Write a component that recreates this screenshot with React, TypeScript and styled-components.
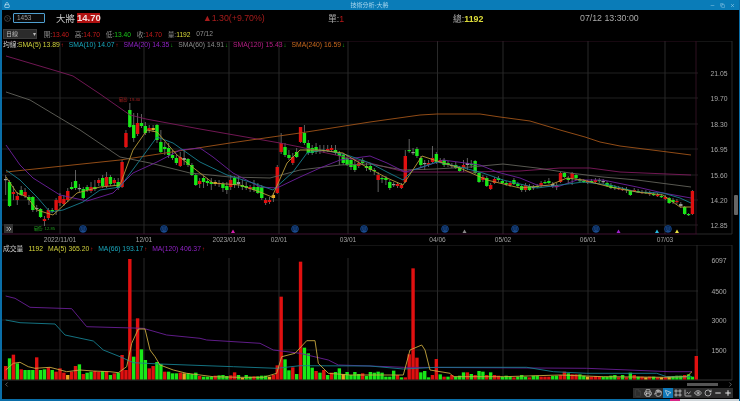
import React from "react";
import styled, { createGlobalStyle } from "styled-components";
import { ChevronLeft, ChevronRight, ChevronsRight, CircleChevronRight, ChartLine, Copy, Eye, File, Frame, Hand, Lock, Minus, MousePointer2, Plus, Printer, RotateCw, X } from "lucide-react";

const FONT = `"Liberation Sans", "Noto Sans CJK TC", sans-serif`;

const Global = createGlobalStyle`
  html, body { margin: 0; background: #000; }
  * { box-sizing: border-box; }
`;

const Win = styled.div`
  width: 740px; height: 401px; display: flex; flex-direction: column; overflow: hidden;
  background: #000; border-left: 2px solid #0a6ea8; border-right: 1px solid #0a6ea8;
  font-family: ${FONT}; color: #a8a8a8; filter: blur(0.35px);
`;
const TitleBar = styled.div`
  height: 10px; flex: none; margin: 0 -1px 0 -2px; padding: 0 5px 0 4px; background: #0a7cb8; color: #cfe8f6;
  display: grid; grid-template-columns: 1fr auto 1fr; align-items: center;
`;
const TitleText = styled.span` font-size: 6px; line-height: 10px; color: #a9d6ee; `;
const WinButtons = styled.div` display: flex; justify-content: flex-end; gap: 5px; color: #a9d6ee; `;
const QuoteRow = styled.div` height: 16px; flex: none; display: flex; align-items: center; padding-left: 2px; `;
const CodeBox = styled.div`
  width: 32px; height: 10px; margin-left: 2px; border: 1px solid #4f9fd0; border-radius: 1px; font-size: 6.5px; line-height: 8px;
  padding-left: 3px; color: #a0a0a0; background: #0a0a0a;
`;
const Name = styled.span` margin-left: 11px; font-size: 9.5px; color: #c8c8c8; width: 20px; white-space: nowrap; `;
const PriceBadge = styled.span`
  margin-left: 1px; width: 23px; height: 10px; background: #b01010; color: #f3dede; font-size: 9.5px; line-height: 10px; font-weight: 700; text-align: center;
`;
const Quote = styled.span<{ $w: number; $c?: string }>`
  font-size: 8.8px; white-space: nowrap; color: ${(p) => p.$c || "#a8a8a8"}; width: ${(p) => p.$w}px; flex: none;
`;
const Yellow = styled.span` color: #dcdc3a; font-weight: 700; `;
const Red = styled.span` color: #b81818; `;
const FilterRow = styled.div` height: 15px; flex: none; display: flex; align-items: center; font-size: 6.7px; padding-left: 1px; gap: 5.7px; `;
const Select = styled.div`
  width: 34px; height: 10px; background: #2b2b2b; border: 1px solid #3c3c3c; font-size: 6px; line-height: 8px; padding-left: 2px; margin-right: 1px;
  display: flex; justify-content: space-between; align-items: center; color: #bbb;
`;
const Stat = styled.span` white-space: nowrap; color: #8e8e8e; `;
const StatValue = styled.span<{ $c: string }>` color: ${(p) => p.$c}; `;
const Panel = styled.div<{ $h: number }>` position: relative; height: ${(p) => p.$h}px; flex: none; `;
const Plot = styled.svg` display: block; width: 737px; height: 100%; font-family: ${FONT}; `;
const Legend = styled.div<{ $top: number; $gap: number }>`
  position: absolute; left: 1px; top: ${(p) => p.$top}px; display: flex; font-size: 6.8px; line-height: 8px; gap: ${(p) => p.$gap}px; white-space: nowrap;
`;
const AverageLabel = styled.span` color: #c8c8c8; margin-right: -5.6px; `;
const LegendItem = styled.span<{ $c: string }>` color: ${(p) => p.$c}; `;
const Up = styled.span` color: #d01818; margin-left: 1px; font-size: 6px; font-weight: 700; `;
const Down = styled.span` color: #1ab01a; margin-left: 1px; font-size: 6px; font-weight: 700; `;
const ExpandBtn = styled.div`
  position: absolute; left: 2px; top: 183px; width: 9px; height: 9px; background: #333; color: #ccc;
  display: flex; align-items: center; justify-content: center;
`;
const SideHandle = styled.div` position: absolute; right: 1px; top: 154px; width: 4px; height: 20px; background: #666; border-radius: 1px; `;
const Footer = styled.div` height: 18px; flex: none; display: flex; flex-direction: column; `;
const ScrollRow = styled.div` height: 7px; display: flex; align-items: center; justify-content: space-between; padding: 0 5px 0 1px; color: #999; `;
const ScrollThumb = styled.div` width: 31px; height: 3px; background: #555; margin-left: auto; margin-right: 9px; `;
const Toolbar = styled.div` display: flex; justify-content: flex-end; padding-right: 6px; height: 10px; `;
const ToolBtn = styled.div<{ $on?: boolean; $dim?: boolean }>`
  width: 10px; height: 10px; display: flex; align-items: center; justify-content: center;
  background: ${(p) => (p.$on ? "#0f78b8" : "#2c2c2c")}; color: ${(p) => (p.$dim ? "#444" : "#e4e4e4")};
`;
const BottomBar = styled.div` height: 2px; flex: none; margin: 0 -1px 0 -2px; display: flex; `;
const BottomSeg = styled.div<{ $c: string; $w?: number }>` background: ${(p) => p.$c}; flex: ${(p) => (p.$w ? `0 0 ${p.$w}px` : "1")}; `;

type CandleRow = [number, number, string, number, number];
const candles: CandleRow[] = [
[179,180,"w",175,195],[182,206,"g",180,207],[192,194,"r",186,200],[196,200,"r",192,205],[190,195,"g",186,196],[192,196,"r",188,198],[197,200,"g",195,205],[197,210,"g",196,212],[208,209,"w",205,212],[209,217,"g",208,218],
[219,221,"r",216,226],[210,218,"r",208,220],[210,211,"g",208,213],[200,210,"r",198,215],[196,203,"r",193,206],[199,204,"r",195,206],[191,200,"r",188,202],[187,189,"g",182,190],[181,188,"g",170,190],[188,189,"w",184,192],
[189,198,"g",187,199],[187,190,"g",185,192],[187,191,"r",182,193],[187,189,"g",180,191],[180,183,"r",178,186],[178,186,"g",175,188],[177,186,"r",172,188],[177,184,"g",175,186],[180,183,"r",178,186],[182,188,"g",178,190],
[162,187,"r",160,188],[133,147,"r",130,148],[110,127,"g",103,128],[125,138,"g",113,142],[123,134,"r",113,136],[123,126,"g",114,128],[126,133,"g",122,135],[128,130,"r",125,133],[128,130,"o",125,132],[125,140,"g",124,143],
[142,152,"g",130,153],[147,149,"g",142,155],[148,155,"g",143,158],[155,158,"g",150,160],[158,163,"g",155,165],[157,166,"r",152,167],[158,160,"w",150,165],[159,165,"g",158,167],[165,175,"g",163,176],[175,185,"g",174,186],
[181,184,"r",178,188],[178,182,"g",176,188],[181,183,"g",178,186],[182,184,"g",178,190],[182,184,"o",180,186],[183,184,"r",180,187],[184,188,"g",182,192],[186,190,"g",182,194],[180,187,"r",175,190],[178,185,"g",176,188],
[182,184,"w",176,188],[185,187,"g",180,190],[186,188,"g",182,190],[187,189,"r",185,192],[187,190,"g",180,192],[187,193,"g",183,194],[187,198,"g",185,200],[200,203,"r",198,205],[200,202,"r",197,204],[195,198,"o",193,202],
[167,193,"r",165,194],[143,152,"r",133,154],[147,155,"g",143,157],[155,158,"g",150,160],[157,163,"r",153,165],[152,157,"g",148,158],[127,142,"r",127,143],[133,143,"g",125,145],[143,153,"g",140,155],[148,153,"g",145,155],
[147,152,"g",143,154],[150,151,"g",145,154],[150,151,"w",145,153],[149,151,"r",145,152],[148,150,"r",145,152],[150,153,"g",145,155],[153,156,"g",151,165],[155,163,"g",153,165],[158,165,"g",155,166],[160,167,"g",158,170],
[165,170,"g",160,172],[163,166,"r",161,168],[160,163,"g",158,165],[166,168,"g",163,171],[166,170,"g",163,172],[170,171,"g",168,175],[175,180,"r",172,192],[178,179,"g",176,183],[178,180,"g",176,185],[182,188,"g",180,190],
[184,185,"w",182,187],[184,186,"r",182,188],[185,188,"r",183,189],[156,182,"r",150,183],[150,151,"g",139,153],[152,153,"w",148,155],[149,156,"g",147,158],[158,165,"g",156,167],[163,164,"w",160,170],[163,165,"r",160,167],
[158,162,"r",146,163],[154,162,"g",152,164],[160,162,"r",158,163],[160,165,"g",158,167],[163,165,"g",161,167],[165,166,"w",163,168],[165,168,"g",162,169],[168,171,"g",166,172],[165,168,"r",160,172],[163,165,"w",158,170],
[164,165,"g",160,168],[161,173,"g",160,174],[173,182,"g",172,183],[177,180,"r",175,182],[178,186,"g",176,187],[185,189,"r",183,190],[179,183,"r",177,184],[178,180,"g",176,182],[181,183,"g",179,184],[183,184,"g",181,186],
[183,185,"r",181,187],[180,184,"g",178,185],[184,186,"g",182,187],[186,190,"g",184,192],[185,190,"r",183,192],[186,190,"g",184,191],[187,188,"w",185,190],[186,187,"g",184,188],[183,185,"r",181,187],[182,183,"g",180,184],
[181,183,"g",178,184],[184,186,"w",182,188],[185,187,"r",183,190],[173,182,"r",172,183],[173,177,"g",172,178],[178,180,"g",176,184],[173,178,"r",172,185],[175,178,"g",174,180],[180,181,"g",178,182],[181,182,"g",179,183],
[181,183,"r",180,184],[181,182,"g",179,183],[180,182,"r",178,183],[180,181,"g",178,183],[181,182,"w",179,184],[183,186,"g",181,187],[185,188,"g",183,189],[187,188,"g",185,190],[188,189,"r",186,190],[189,190,"r",187,191],
[189,190,"g",187,193],[191,195,"g",190,196],[190,191,"r",188,192],[191,192,"g",189,193],[192,193,"r",190,194],[192,193,"g",190,194],[193,194,"r",191,196],[194,195,"g",192,196],[195,196,"r",193,197],[196,197,"g",194,198],
[197,199,"r",195,200],[198,203,"g",197,204],[200,202,"g",198,204],[201,202,"r",199,204],[204,206,"w",202,208],[207,214,"g",206,215],[214,215,"g",213,216],[191,214,"r",190,215],
];

const volumeSpec =
"r318 g295 r284 g310 r328 g330 g330 g330 r292 g330 g328 r322 g330 r335 r325 r338 o345 r335 r318 g313 r342 g338 g335 r333 r335 g333 r333 g345 r340 g338 r285 r330 r-3 g290 r175 g268 g300 r325 r318 g306 g312 r335 g335 g340 g340 r338 o340 g340 g342 g338 r348 g350 g350 g350 r347 g346 g345 g348 r346 r337 g345 o353 g345 g350 r349 g349 g347 g347 o350 r345 r316 r110 g298 g331 r322 g342 r5 g263 g280 g323 r333 g338 r330 g345 r338 g336 g325 o342 g336 g345 g336 g342 r340 g348 g336 g338 g335 g338 g350 g350 g332 r345 g352 r352 r283 r25 r293 g337 g333 g352 r345 r297 g343 r350 g350 r345 g350 g347 g337 r337 g342 r345 g333 g335 r345 g337 r345 r347 g350 g347 g350 r352 g350 g345 g350 r352 g347 g347 r350 r350 r350 g348 g347 r345 r335 g340 r343 r343 g343 g347 o350 r350 r348 r350 g350 g350 g347 g345 r352 g345 r352 g338 r345 g350 r350 o352 r350 g350 r352 o352 r352 o350 g348 g347 g347 r345 g343 g350 r288".split(" ");

const barX = (i: number) => 5.67 + 3.88 * i;
const colorOf: Record<string, string> = { r: "#e01010", g: "#18e818", o: "#e8a820", w: "#999" };

const Z = (pts: number[][], ox: number, oy: number) => pts.map(([x, y]) => [ox + x / 3, oy + y / 3]);
const toLine = (pts: number[][]) => pts.map(([x, y]) => `${x.toFixed(1)},${y.toFixed(1)}`).join(" ");

const priceLines: { c: string; pts: number[][] }[] = [
  { c: "#7d1a5c", pts: [[6,56],[60,72],[73,76],[100,94],[130,115],[146,119],[200,129],[240,136],[280,143],[300,147],[340,156],[370,163],[405,172],[470,172],[520,171],[560,168],[590,168],[620,172],[691,175]] },
  { c: "#a05418", pts: [[6,172],[120,160],[230,143],[300,133],[370,122],[420,115],[437,114],[480,114],[500,117],[530,121],[560,130],[585,137],[600,142],[620,146],[660,151],[691,155]] },
  { c: "#62625a", pts: [[6,92],[30,100],[60,118],[80,130],[120,157],[150,163],[190,173],[230,177],[270,178],[300,170],[340,165],[370,164],[403,170],[435,169],[470,167],[503,164],[537,168],[570,173],[603,177],[637,180],[691,187]] },
  { c: "#6e209e", pts: [[6,145],[20,165],[33,178],[60,195],[87,201],[113,193],[133,173],[157,162],[180,150],[200,148],[213,157],[233,173],[260,187],[277,188],[300,177],[320,168],[340,160],[370,156],[387,163],[405,172],[420,168],[443,160],[480,165],[497,172],[520,178],[537,185],[557,187],[577,180],[603,180],[637,187],[663,193],[691,198]] },
  { c: "#187f90", pts: [[6,170],[20,180],[37,197],[50,212],[63,210],[83,202],[100,190],[120,187],[140,160],[157,137],[173,143],[200,162],[227,175],[253,183],[273,190],[293,172],[307,153],[323,150],[347,155],[370,163],[387,172],[403,180],[413,170],[437,162],[460,167],[483,173],[503,180],[537,188],[560,185],[583,182],[610,185],[637,192],[663,193],[680,198],[691,203]] },
  { c: "#b89a38", pts: [[6,177],[17,193],[27,197],[37,210],[53,215],[77,193],[100,187],[120,185],[133,150],[147,130],[157,132],[177,155],[200,173],[213,183],[240,185],[260,192],[272,197],[287,163],[300,150],[320,150],[343,153],[363,165],[387,178],[403,185],[422,156],[440,162],[460,168],[487,180],[520,188],[550,185],[567,178],[583,180],[610,187],[637,192],[663,195],[680,207],[691,207]] },
];

const volLines: { c: string; pts: number[][] }[] = [
  { c: "#6a1f96", pts: [...Z([[17,108],[45,115],[90,142],[215,146],[260,200],[430,205],[500,225],[600,235],[620,240],[780,250],[820,270],[900,280],[985,300],[1015,315],[1110,318]],0,260), ...Z([[100,322],[650,325],[900,335],[966,335]],370,260)] },
  { c: "#167f90", pts: [...Z([[17,180],[60,188],[165,192],[195,225],[280,243],[310,270],[360,290],[400,308],[480,312],[700,320],[830,325],[900,317],[1110,318]],0,260), ...Z([[100,327],[200,322],[470,322],[550,335],[650,340],[860,340],[890,350],[966,350]],370,260)] },
  { c: "#c8a840", pts: [...Z([[17,330],[40,310],[60,307],[85,320],[105,325],[150,322],[200,335],[240,330],[280,333],[330,335],[355,338],[380,320],[395,250],[415,207],[435,207],[450,270],[465,290],[480,315],[520,330],[560,340],[640,350],[720,352],[790,352],[830,340],[845,290],[885,280],[920,242],[945,242],[955,310],[985,340],[1050,345],[1110,345]],0,260), ...Z([[100,345],[120,270],[155,255],[165,270],[180,330],[240,340],[250,350],[400,350],[570,345],[700,350],[880,352],[950,350],[966,335]],370,260)] },
];

const vGrid = [60, 144, 229, 279, 348, 437.5, 503, 588, 665];
const dates: [number, string][] = [[60,"2022/11/01"],[144,"12/01"],[229,"2023/01/03"],[279,"02/01"],[348,"03/01"],[437.5,"04/06"],[503,"05/02"],[588,"06/01"],[665,"07/03"]];
const priceAxis: [number, string][] = [[73,"21.05"],[98,"19.70"],[124,"18.30"],[149,"16.95"],[175,"15.60"],[200,"14.20"],[225,"12.85"]];
const volAxis: [number, string][] = [[260,"6097"],[291,"4500"],[320,"3000"],[350,"1500"]];
const dividends = [83, 164, 295, 364, 445, 515, 596, 668];
const marks: [number, string][] = [[233,"#d81fb0"],[464.5,"#888"],[618.5,"#a020d0"],[657,"#28b8e0"],[677,"#e8e040"]];

const smas = [
  ["SMA(5) 13.89", "#cfcf3c", 1], ["SMA(10) 14.07", "#1aa6bc", 1], ["SMA(20) 14.35", "#8f22c4", 0],
  ["SMA(60) 14.91", "#8c8c8c", 0], ["SMA(120) 15.43", "#b81e86", 0], ["SMA(240) 16.59", "#c8681e", 0],
] as const;

export default function App() {
  return (
    <>
      <Global />
      <Win>
        <TitleBar>
          <Lock size={6} strokeWidth={2.5} />
          <TitleText>技術分析-大將</TitleText>
          <WinButtons>
            <Minus size={5} strokeWidth={2} />
            <Copy size={5} strokeWidth={2} />
            <X size={5} strokeWidth={2.5} />
          </WinButtons>
        </TitleBar>

        <QuoteRow>
          <CircleChevronRight size={7} color="#888" strokeWidth={1.5} />
          <CodeBox>1453</CodeBox>
          <Name>大將</Name>
          <PriceBadge>14.70</PriceBadge>
          <Quote $w={103} />
          <Quote $w={125} $c="#a81c1c">▲1.30(+9.70%)</Quote>
          <Quote $w={125}>單:<Red>1</Red></Quote>
          <Quote $w={127}>總:<Yellow>1192</Yellow></Quote>
          <Quote $w={70}>07/12 13:30:00</Quote>
        </QuoteRow>

        <FilterRow>
          <Select>日線<span>▾</span></Select>
          <Stat>開:<StatValue $c="#c41a1a">13.40</StatValue></Stat>
          <Stat>高:<StatValue $c="#c41a1a">14.70</StatValue></Stat>
          <Stat>低:<StatValue $c="#1ac41a">13.40</StatValue></Stat>
          <Stat>收:<StatValue $c="#c41a1a">14.70</StatValue></Stat>
          <Stat>量:<StatValue $c="#d8d83a">1192</StatValue></Stat>
          <Stat>07/12</Stat>
        </FilterRow>

        <Panel $h={204}>
          <Plot viewBox="2 41 737 204">
            <g stroke="#333" strokeWidth="0.8">
              {vGrid.map((x) => <line key={x} x1={x} x2={x} y1={41} y2={234} />)}
              {priceAxis.map(([y]) => <line key={y} x1={2} x2={698} y1={y} y2={y} stroke="#2a2a2a" />)}
              <line x1={697} x2={732} y1={41} y2={41} />
              <line x1={732} x2={732} y1={41} y2={234} />
              <line x1={697} x2={732} y1={234} y2={234} />
            </g>
            <line x1={2} x2={697} y1={41} y2={41} stroke="#3a1428" strokeWidth="0.8" />
            <line x1={2} x2={697} y1={234} y2={234} stroke="#501640" strokeWidth="0.8" />
            <line x1={696} x2={696} y1={41} y2={234} stroke="#3a1428" strokeWidth="0.8" />
            {candles.map(([t, b, c, wt, wb], i) => {
              const x = barX(i);
              return (
                <g key={i}>
                  <line x1={x} x2={x} y1={wt} y2={wb} stroke="#8a8a8a" strokeWidth="0.7" />
                  <rect x={x - 1.7} y={t} width={3.4} height={Math.max(b - t, 1.2)} fill={colorOf[c]} />
                </g>
              );
            })}
            {priceLines.map((l) => <polyline key={l.c} points={toLine(l.pts)} fill="none" stroke={l.c} strokeWidth="0.9" />)}
            {dividends.map((x) => (
              <g key={x}>
                <circle cx={x} cy={229} r={3.4} fill="#061f46" stroke="#184c96" strokeWidth="0.8" />
                <text x={x} y={231} textAnchor="middle" fontSize="4.5" fill="#2f70c0">息</text>
              </g>
            ))}
            {marks.map(([x, c]) => <polygon key={x} points={`${x - 2},233 ${x + 2},233 ${x},229.5`} fill={c} />)}
            <text x={129.5} y={101} textAnchor="middle" fontSize="4.2" fill="#a82020">最高: 19.40</text>
            <text x={44.5} y={230} textAnchor="middle" fontSize="4.2" fill="#1f9a1f">最低: 12.85</text>
            <g fontSize="6.6" fill="#a0a0a0" textAnchor="middle">
              {dates.map(([x, s]) => <text key={s} x={x} y={241.5}>{s}</text>)}
            </g>
            <g fontSize="6.8" fill="#a8a8a8" textAnchor="middle">
              {priceAxis.map(([y, s]) => <text key={s} x={719} y={y + 2.5}>{s}</text>)}
            </g>
          </Plot>
          <Legend $top={0} $gap={5}>
            <AverageLabel>均線:</AverageLabel>
            {smas.map(([t, c, up]) => (
              <LegendItem key={t} $c={c}>{t}{up ? <Up>↑</Up> : <Down>↓</Down>}</LegendItem>
            ))}
          </Legend>
          <ExpandBtn><ChevronsRight size={8} strokeWidth={2.5} /></ExpandBtn>
          <SideHandle />
        </Panel>

        <Panel $h={136}>
          <Plot viewBox="2 245 737 136">
            <g stroke="#333" strokeWidth="0.8">
              {vGrid.map((x) => <line key={x} x1={x} x2={x} y1={x > 350 ? 245 : 258} y2={380} />)}
              {volAxis.slice(1).map(([y]) => <line key={y} x1={2} x2={698} y1={y} y2={y} stroke="#2a2a2a" />)}
              <line x1={697} x2={697} y1={245} y2={380} />
              <line x1={350} x2={732} y1={245} y2={245} />
              <line x1={732} x2={732} y1={245} y2={380} />
              <line x1={2} x2={732} y1={380} y2={380} stroke="#444" />
            </g>
            {volumeSpec.map((s, i) => {
              const top = 260 + Number(s.slice(1)) / 3;
              return <rect key={i} x={barX(i) - 1.7} y={top} width={3.4} height={379.5 - top} fill={colorOf[s[0]]} />;
            })}
            {volLines.map((l) => <polyline key={l.c} points={toLine(l.pts)} fill="none" stroke={l.c} strokeWidth="0.9" />)}
            <g fontSize="6.8" fill="#a8a8a8" textAnchor="middle">
              {volAxis.map(([y, s]) => <text key={s} x={719} y={y + 2.5}>{s}</text>)}
            </g>
          </Plot>
          <Legend $top={0} $gap={5}>
            <LegendItem $c="#c8c8c8">成交量</LegendItem>
            <LegendItem $c="#d8d83a">1192</LegendItem>
            <LegendItem $c="#cfcf3c">MA(5) 365.20<Up>↑</Up></LegendItem>
            <LegendItem $c="#1aa6bc">MA(66) 193.17<Up>↑</Up></LegendItem>
            <LegendItem $c="#8f22c4">MA(120) 406.37<Up>↑</Up></LegendItem>
          </Legend>
        </Panel>

        <Footer>
          <ScrollRow>
            <ChevronLeft size={7} />
            <ScrollThumb />
            <ChevronRight size={7} />
          </ScrollRow>
          <Toolbar>
            <ToolBtn $dim><File size={8} /></ToolBtn>
            <ToolBtn><Printer size={8} /></ToolBtn>
            <ToolBtn><Hand size={8} /></ToolBtn>
            <ToolBtn $on><MousePointer2 size={8} /></ToolBtn>
            <ToolBtn><Frame size={8} /></ToolBtn>
            <ToolBtn><ChartLine size={8} /></ToolBtn>
            <ToolBtn><Eye size={8} /></ToolBtn>
            <ToolBtn><RotateCw size={8} /></ToolBtn>
            <ToolBtn><Minus size={8} strokeWidth={3} /></ToolBtn>
            <ToolBtn><Plus size={8} strokeWidth={3} /></ToolBtn>
          </Toolbar>
        </Footer>

        <BottomBar>
          <BottomSeg $c="#0a6ea8" />
          <BottomSeg $c="#d82888" $w={10} />
          <BottomSeg $c="#cfd6da" $w={60} />
        </BottomBar>
      </Win>
    </>
  );
}
